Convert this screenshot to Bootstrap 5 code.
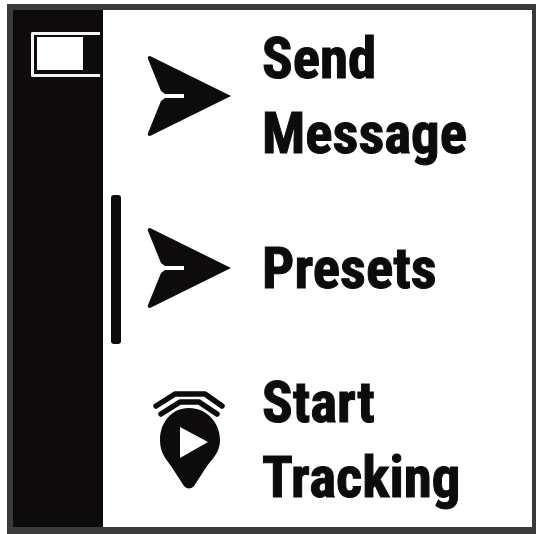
<!DOCTYPE html>
<html lang="en">
<head>
<meta charset="utf-8">
<title>Device menu</title>
<link href="https://cdn.jsdelivr.net/npm/bootstrap@5.3.0/dist/css/bootstrap.min.css" rel="stylesheet">
<style>
html,body{height:100%;background:#fff;overflow:hidden}
.page-wrap{width:537px;height:534px;padding:4px 1px 0 7px}
.frame{height:100%;border:solid #3a3a3a;border-width:6px 4px 7px 6px;background:#fff;filter:blur(.5px)}
.side{width:90px;background:#0d0b0b;padding-top:22px;flex:none}
.batt{width:69px;height:45px;margin-left:18px;border:3px solid #f4f4f0;border-right:0;padding:2px 0 4px 3px;border-radius:2px 0 0 2px}
.batt-fill{width:46px;height:100%;background:#fff}
.menu-area{padding-left:8px}
.scroll-bar{width:10px;height:149px;background:#0d0b0b;border-radius:3px;margin-top:185px;flex:none}
.items{padding-left:26px}
.entry{font-family:"Roboto Condensed","Liberation Sans",sans-serif;font-weight:700;font-size:57px;line-height:75px;color:#0d0b0b;-webkit-text-stroke:1px #0d0b0b;white-space:nowrap}
.entry-row{height:172px;gap:31px}
.entry-row svg{flex:none}
</style>
</head>
<body>
<div class="page-wrap">
  <div class="frame d-flex">
    <div class="side"><div class="batt"><div class="batt-fill"></div></div></div>
    <div class="menu-area d-flex flex-grow-1">
      <div class="scroll-bar"></div>
      <div class="items flex-grow-1">
        <div class="entry-row d-flex align-items-center">
          <svg width="84" height="82" viewBox="0 0 84 82"><path fill="#0d0b0b" d="M3 1 84 41 3 81Q0 81 1 78L14 46 18 43H37V39H18L14 36 1 4Q0 1 3 1Z"/></svg>
          <div class="entry">Send<br>Message</div>
        </div>
        <div class="entry-row d-flex align-items-center">
          <svg width="84" height="82" viewBox="0 0 84 82"><path fill="#0d0b0b" d="M3 1 84 41 3 81Q0 81 1 78L14 46 18 43H37V39H18L14 36 1 4Q0 1 3 1Z"/></svg>
          <div class="entry">Presets</div>
        </div>
        <div class="entry-row d-flex align-items-center">
          <svg width="84" height="100" viewBox="0 0 84 100"><g fill="none" stroke="#0d0b0b" stroke-width="5.500" stroke-linecap="round" stroke-linejoin="round"><path d="M9 16 28 4H58L75 16"/><path d="M14 24 33 12H52L70 24"/></g><path fill="#0d0b0b" fill-rule="evenodd" d="M42 18C60 18 73 33 73 50 73 62 66 68 60 76L47 96Q42 101 37 96L24 76C18 68 13 62 13 50 13 33 24 18 42 18ZM33 37V68L61 52 33 37Z"/></svg>
          <div class="entry">Start<br>Tracking</div>
        </div>
      </div>
    </div>
  </div>
</div>
<script src="https://cdn.jsdelivr.net/npm/bootstrap@5.3.0/dist/js/bootstrap.bundle.min.js"></script>
</body>
</html>
